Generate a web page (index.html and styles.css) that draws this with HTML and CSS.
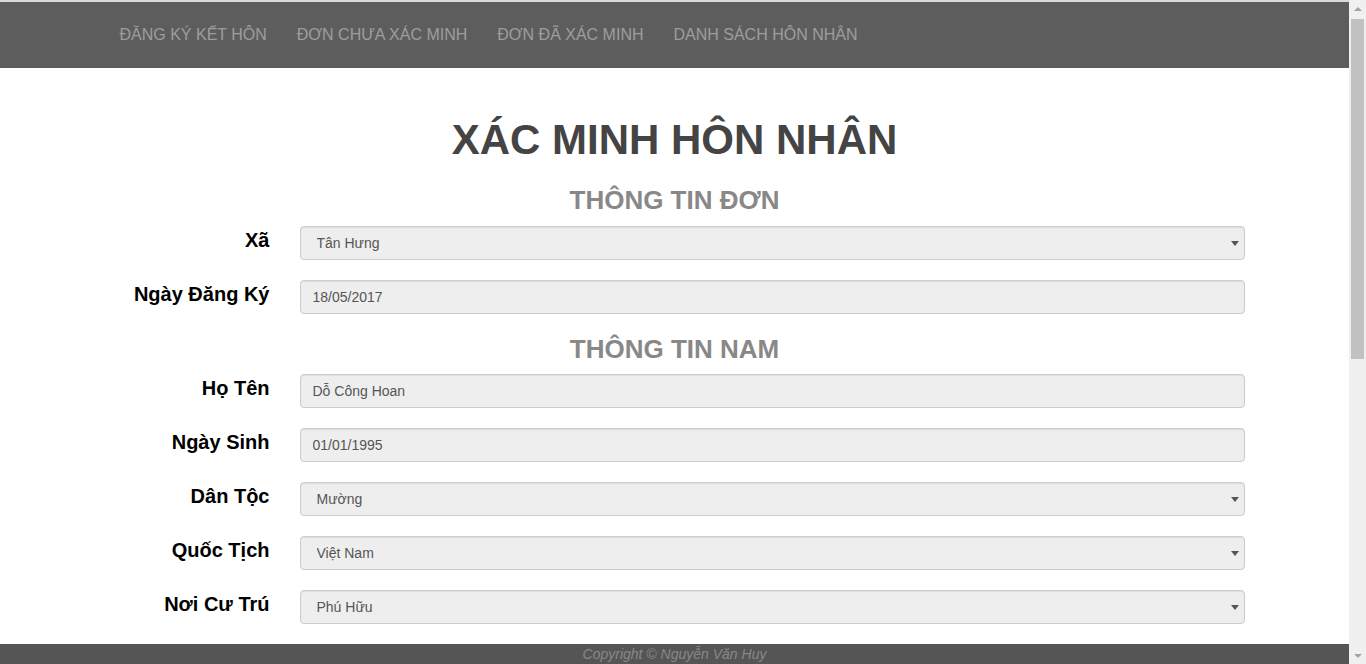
FILE: index.html
```html
<!DOCTYPE html>
<html lang="vi">
<head>
<meta charset="utf-8">
<title>Xác minh hôn nhân</title>
<link rel="stylesheet" href="styles.css">
</head>
<body>
<nav class="navbar">
  <div class="container">
    <ul class="nav">
      <li><a href="#">ĐĂNG KÝ KẾT HÔN</a></li>
      <li><a href="#">ĐƠN CHƯA XÁC MINH</a></li>
      <li><a href="#">ĐƠN ĐÃ XÁC MINH</a></li>
      <li><a href="#">DANH SÁCH HÔN NHÂN</a></li>
    </ul>
  </div>
</nav>

<main class="container">
  <h1 class="title">XÁC MINH HÔN NHÂN</h1>
  <form class="form">
    <h3 class="section first">THÔNG TIN ĐƠN</h3>
    <div class="row">
      <label class="label">Xã</label>
      <div class="field"><div class="select-wrap"><select class="control select"><option>Tân Hưng</option></select></div></div>
    </div>
    <div class="row">
      <label class="label">Ngày Đăng Ký</label>
      <div class="field"><input class="control" type="text" value="18/05/2017" readonly></div>
    </div>

    <h3 class="section">THÔNG TIN NAM</h3>
    <div class="row">
      <label class="label">Họ Tên</label>
      <div class="field"><input class="control" type="text" value="Dỗ Công Hoan" readonly></div>
    </div>
    <div class="row">
      <label class="label">Ngày Sinh</label>
      <div class="field"><input class="control" type="text" value="01/01/1995" readonly></div>
    </div>
    <div class="row">
      <label class="label">Dân Tộc</label>
      <div class="field"><div class="select-wrap"><select class="control select"><option>Mường</option></select></div></div>
    </div>
    <div class="row">
      <label class="label">Quốc Tịch</label>
      <div class="field"><div class="select-wrap"><select class="control select"><option>Việt Nam</option></select></div></div>
    </div>
    <div class="row">
      <label class="label">Nơi Cư Trú</label>
      <div class="field"><div class="select-wrap"><select class="control select"><option>Phú Hữu</option></select></div></div>
    </div>
  </form>
</main>

<footer class="footer">Copyright © Nguyễn Văn Huy</footer>

<div class="scrollbar" aria-hidden="true">
  <span class="sb-btn sb-up"></span>
  <span class="sb-thumb"></span>
  <span class="sb-btn sb-down"></span>
</div>
</body>
</html>
```

FILE: styles.css
```css
* { box-sizing: border-box; }

html {
  font-family: "Liberation Sans", Arial, sans-serif;
}

body {
  margin: 0;
  padding-right: 17px;
  border-top: 2px solid #dadada;
  background: #fff;
  color: #333;
  font-size: 14px;
}

.container {
  width: 1170px;
  margin: 0 auto;
  padding: 0 15px;
}

/* navbar */
.navbar {
  background: #5d5d5d;
  height: 66px;
  display: flex;
  align-items: center;
}
.nav {
  list-style: none;
  margin: 0;
  padding: 0;
  display: flex;
}
.nav a {
  display: block;
  padding: 0 15px;
  font-size: 16px;
  line-height: 20px;
  color: #9d9d9d;
  text-decoration: none;
}

/* headings */
.title {
  margin: 49px 0 0;
  text-align: center;
  font-size: 42px;
  line-height: 46px;
  font-weight: bold;
  color: #444;
}
.section {
  margin: 0 0 10px;
  padding-top: 1px;
  text-align: center;
  font-size: 26px;
  line-height: 29px;
  font-weight: bold;
  color: #888;
}
.section.first { margin-top: 22px; margin-bottom: 11px; }

/* form */
.form { margin: 0; }
.row {
  display: grid;
  grid-template-columns: 195px 975px;
  margin: 0 -15px 20px;
}
.label {
  padding: 0 15px;
  text-align: right;
  font-size: 20px;
  line-height: 28px;
  font-weight: bold;
  color: #000;
}
.field { padding: 0 15px; }

.control {
  display: block;
  width: 100%;
  height: 34px;
  margin: 0;
  padding: 6px 12px;
  font-family: "Liberation Sans", Arial, sans-serif;
  font-size: 14px;
  line-height: 20px;
  color: #555;
  background: #eee;
  border: 1px solid #ccc;
  border-radius: 4px;
  box-shadow: inset 0 1px 1px rgba(0,0,0,.075);
  outline: none;
}
.select {
  -webkit-appearance: none;
  appearance: none;
  padding-left: 16px;
}
.select-wrap { position: relative; }
.select-wrap::after {
  content: "";
  position: absolute;
  right: 6px;
  top: 15px;
  width: 0;
  height: 0;
  border-left: 4px solid transparent;
  border-right: 4px solid transparent;
  border-top: 5px solid #555;
  pointer-events: none;
}

/* footer */
.footer {
  position: fixed;
  left: 0;
  right: 17px;
  bottom: 0;
  height: 20px;
  background: #555;
  color: #888;
  font-style: italic;
  font-size: 14px;
  line-height: 20px;
  text-align: center;
}

/* window scrollbar */
.scrollbar {
  position: fixed;
  top: 0;
  right: 0;
  width: 17px;
  height: 100%;
  background: #f0f0f0;
  display: flex;
  flex-direction: column;
  align-items: center;
}
.sb-btn {
  width: 17px;
  height: 17px;
  flex: none;
  display: flex;
  align-items: center;
  justify-content: center;
}
.sb-btn::before {
  content: "";
  width: 0;
  height: 0;
  border-left: 4px solid transparent;
  border-right: 4px solid transparent;
}
.sb-up::before { border-bottom: 4px solid #a3a3a3; }
.sb-down { margin-top: auto; }
.sb-down::before { border-top: 4px solid #a3a3a3; }
.sb-thumb {
  width: 13px;
  height: 340px;
  margin-top: 2px;
  background: #c1c1c1;
}
```
